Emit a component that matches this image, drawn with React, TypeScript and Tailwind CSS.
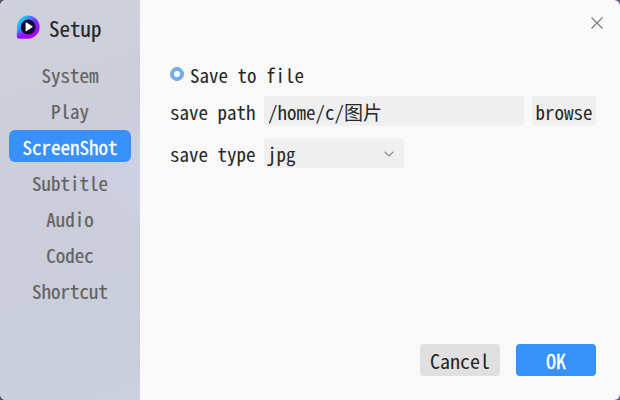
import React from "react";

const items = ["System", "Play", "ScreenShot", "Subtitle", "Audio", "Codec", "Shortcut"];

function Logo() {
  return (
    <svg width="24" height="24" viewBox="0 0 24 24" className="block">
      <defs>
        <linearGradient id="drop" x1="0.05" y1="0.15" x2="0.8" y2="0.8">
          <stop offset="0" stopColor="#16e0fb" />
          <stop offset="0.3" stopColor="#2fa0ff" />
          <stop offset="0.6" stopColor="#7a30ff" />
          <stop offset="1" stopColor="#9a10fa" />
        </linearGradient>
        <linearGradient id="tail" x1="0" y1="0" x2="0.3" y2="1">
          <stop offset="0.65" stopColor="#9a00ff" stopOpacity="0" />
          <stop offset="1" stopColor="#a800ff" />
        </linearGradient>
      </defs>
      <path d="M12 0.4A11.3 11.3 0 0 1 12 23.4H2.8Q0.6 23.4 0.8 21.2L1 12A11.3 11.5 0 0 1 12 0.4Z" fill="url(#drop)" />
      <path d="M12 0.4A11.3 11.3 0 0 1 12 23.4H2.8Q0.6 23.4 0.8 21.2L1 12A11.3 11.5 0 0 1 12 0.4Z" fill="url(#tail)" />
      <circle cx="12.2" cy="11.9" r="7.4" fill="#0c0b35" />
      <path d="M10.2 8L16 11.8L10.2 15.6Z" fill="#fff" stroke="#fff" strokeWidth="1.2" strokeLinejoin="round" />
    </svg>
  );
}

export default function App() {
  return (
    <div className="h-[400px] w-[620px] bg-[linear-gradient(90deg,#4d5078,#6b5a80)] font-['Noto_Sans_Mono_CJK_SC','Noto_Sans_CJK_SC',monospace] text-[19px] leading-7 whitespace-pre text-[#262626]">
      <div className="flex h-full overflow-hidden rounded-md bg-[#f9f9f9]">
        <aside className="flex w-[140px] shrink-0 flex-col bg-[radial-gradient(60px_70px_at_140px_175px,#cdd1e4,transparent),linear-gradient(160deg,#cfd0da_0%,#cccddb_50%,#cacddb_70%,#ccd0dc_100%)]">
          <div className="flex h-[58px] items-start gap-[9px] pt-[15px] pl-4">
            <Logo />
            <span className="-mt-px text-[21px] [-webkit-text-stroke:0.15px_currentColor]">Setup</span>
          </div>
          <nav className="flex flex-col gap-1 px-[9px]">
            {items.map((item) => (
              <div
                key={item}
                className={
                  item === "ScreenShot"
                    ? "flex h-8 items-center justify-center rounded-md bg-[#3890fa] pt-[2px] text-white [-webkit-text-stroke:0.3px_currentColor]"
                    : "flex h-8 items-center justify-center pt-[2px] text-[#62635f] [-webkit-text-stroke:0.2px_currentColor]"
                }
              >
                {item}
              </div>
            ))}
          </nav>
        </aside>
        <main className="flex flex-1 flex-col pr-6 pl-[30px]">
          <div className="flex h-[60px] justify-end pt-[17px]">
            <svg width="12" height="12" viewBox="0 0 12 12" className="-mr-[7px]">
              <path d="M0.5 0.5L11.5 11.5M11.5 0.5L0.5 11.5" stroke="#777" strokeWidth="1.1" />
            </svg>
          </div>
          <div className="flex h-9 items-start gap-[6px]">
            <span className="mt-[7px] flex size-[14px] items-center justify-center rounded-full border border-[#9a9fa6] bg-[#6daefc]">
              <span className="size-[6px] rounded-full bg-white" />
            </span>
            <span className="mt-px">Save to file</span>
          </div>
          <div className="flex h-[42px] items-start">
            <span className="mt-[2px] w-[94px]">save path</span>
            <div className="mr-2 h-[30px] w-[260px] rounded bg-[#efefef] pt-[2px] pl-1">/home/c/图片</div>
            <button className="flex h-[30px] w-16 items-center justify-center rounded bg-[#efefef] pt-[2px]">browse</button>
          </div>
          <div className="flex items-start">
            <span className="mt-[2px] w-[94px]">save type</span>
            <div className="flex h-[30px] w-[140px] justify-between rounded bg-[#efefef] pt-[2px] pr-[10px] pl-[3px]">
              <span>jpg</span>
              <svg width="10" height="6" viewBox="0 0 10 6" className="mt-[11px]">
                <path d="M0.5 0.7L5 5L9.5 0.7" fill="none" stroke="#858585" strokeWidth="1.1" />
              </svg>
            </div>
          </div>
          <div className="mt-auto mb-6 flex justify-end gap-4 text-[20px]">
            <button className="flex h-8 w-20 items-center justify-center rounded bg-[#e0e0e0] pt-px">Cancel</button>
            <button className="flex h-8 w-20 items-center justify-center rounded bg-[#3890fa] pt-px text-white [-webkit-text-stroke:0.3px_currentColor]">OK</button>
          </div>
        </main>
      </div>
    </div>
  );
}
